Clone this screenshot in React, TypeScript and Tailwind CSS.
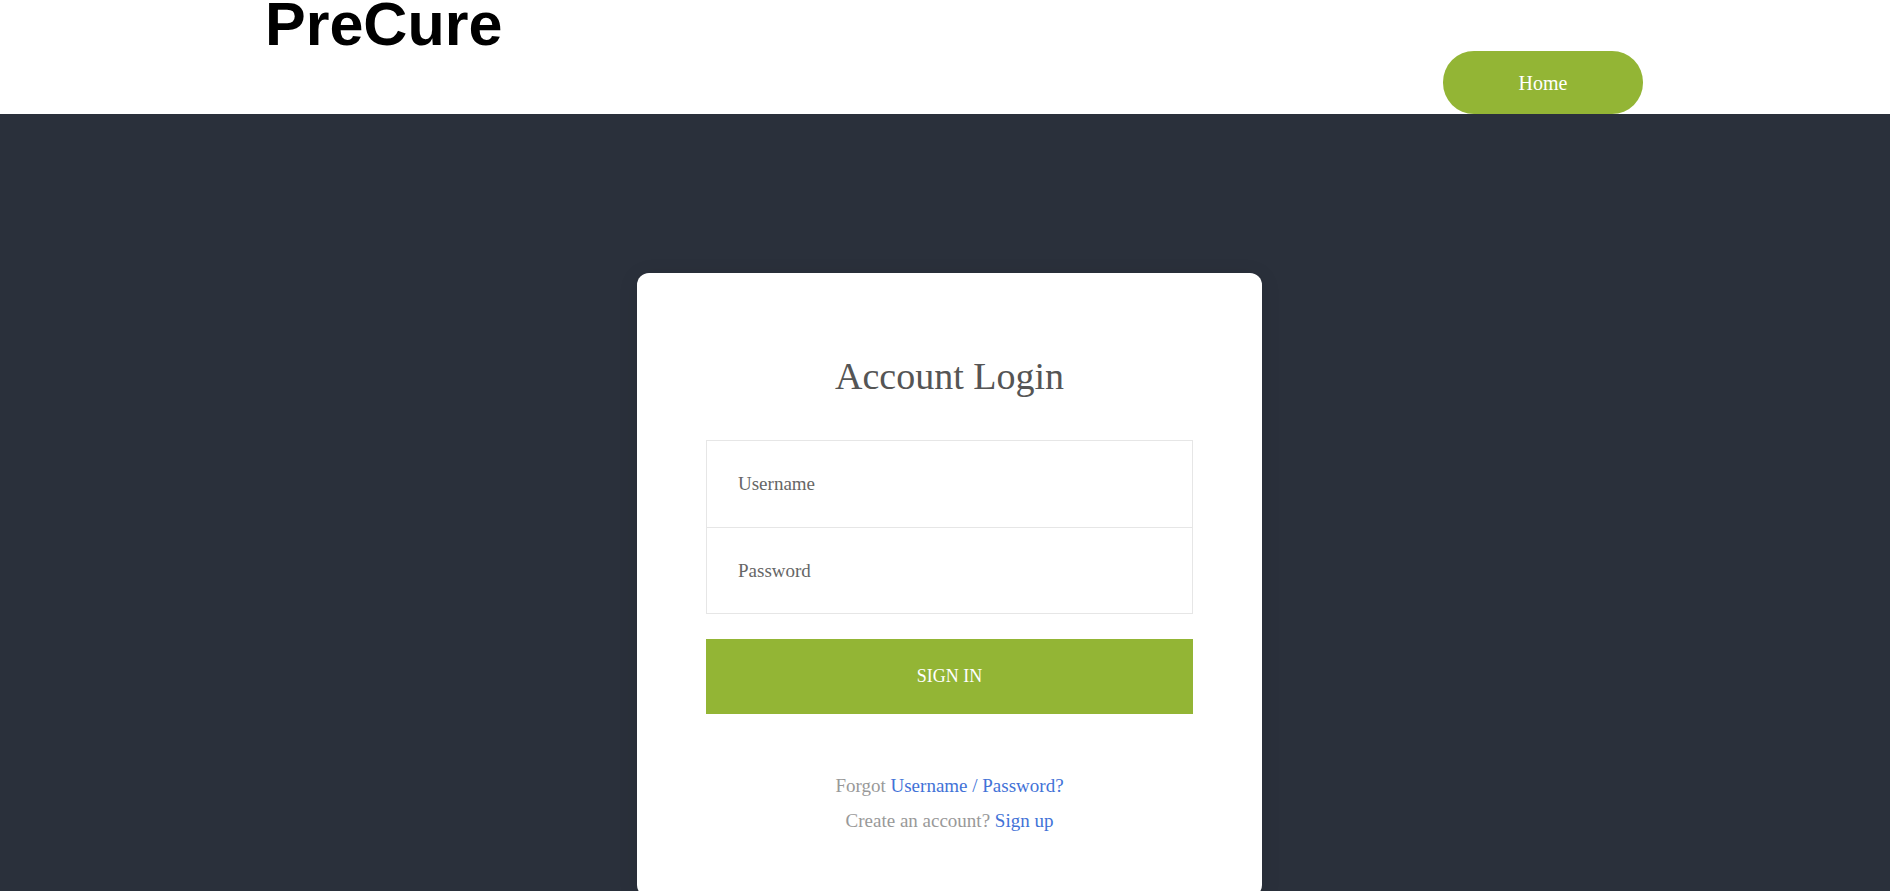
import React from "react";

export default function App() {
  return (
    <div className="flex h-screen flex-col overflow-hidden bg-[#2a303b] font-['Liberation_Serif',serif]">
      <header className="bg-white">
        <div className="mx-auto flex h-[114px] max-w-[1396px] items-end justify-between pl-[18px]">
          <a
            href="#"
            className="self-start font-['Liberation_Sans',sans-serif] text-[61px] leading-[49px] font-bold text-black"
          >
            PreCure
          </a>
          <nav>
            <a
              href="#"
              className="flex h-[63px] w-[200px] items-center justify-center rounded-[31px] bg-[#93b535] text-xl text-white"
            >
              Home
            </a>
          </nav>
        </div>
      </header>

      <main className="flex flex-1 justify-center pt-[159px] pl-[9px]">
        <section className="h-[624px] w-full max-w-[625px] shrink-0 rounded-xl bg-white px-[69px] pt-20 shadow-[0_3px_20px_rgba(0,0,0,0.1)]">
          <form onSubmit={(event) => event.preventDefault()}>
            <h1 className="text-center text-[38px] leading-[46px] text-[#555555]">
              Account Login
            </h1>

            <div className="mt-[41px] divide-y divide-[#e6e6e6] border border-[#e6e6e6]">
              <input
                type="text"
                aria-label="Username"
                placeholder="Username"
                className="block h-[87px] w-full px-[31px] text-[19px] text-[#666666] outline-none placeholder:text-[#666666]"
              />
              <input
                type="password"
                aria-label="Password"
                placeholder="Password"
                className="block h-[85px] w-full px-[31px] text-[19px] text-[#666666] outline-none placeholder:text-[#666666]"
              />
            </div>

            <button
              type="submit"
              className="mt-[25px] h-[75px] w-full bg-[#93b535] text-[18px] text-white"
            >
              SIGN IN
            </button>

            <div className="mt-[54px] text-center text-[19px] leading-[35px] text-[#999999]">
              <p>
                Forgot{" "}
                <a href="#" className="text-[#4272d7]">
                  Username / Password?
                </a>
              </p>
              <p>
                Create an account?{" "}
                <a href="#" className="text-[#4272d7]">
                  Sign up
                </a>
              </p>
            </div>
          </form>
        </section>
      </main>
    </div>
  );
}
